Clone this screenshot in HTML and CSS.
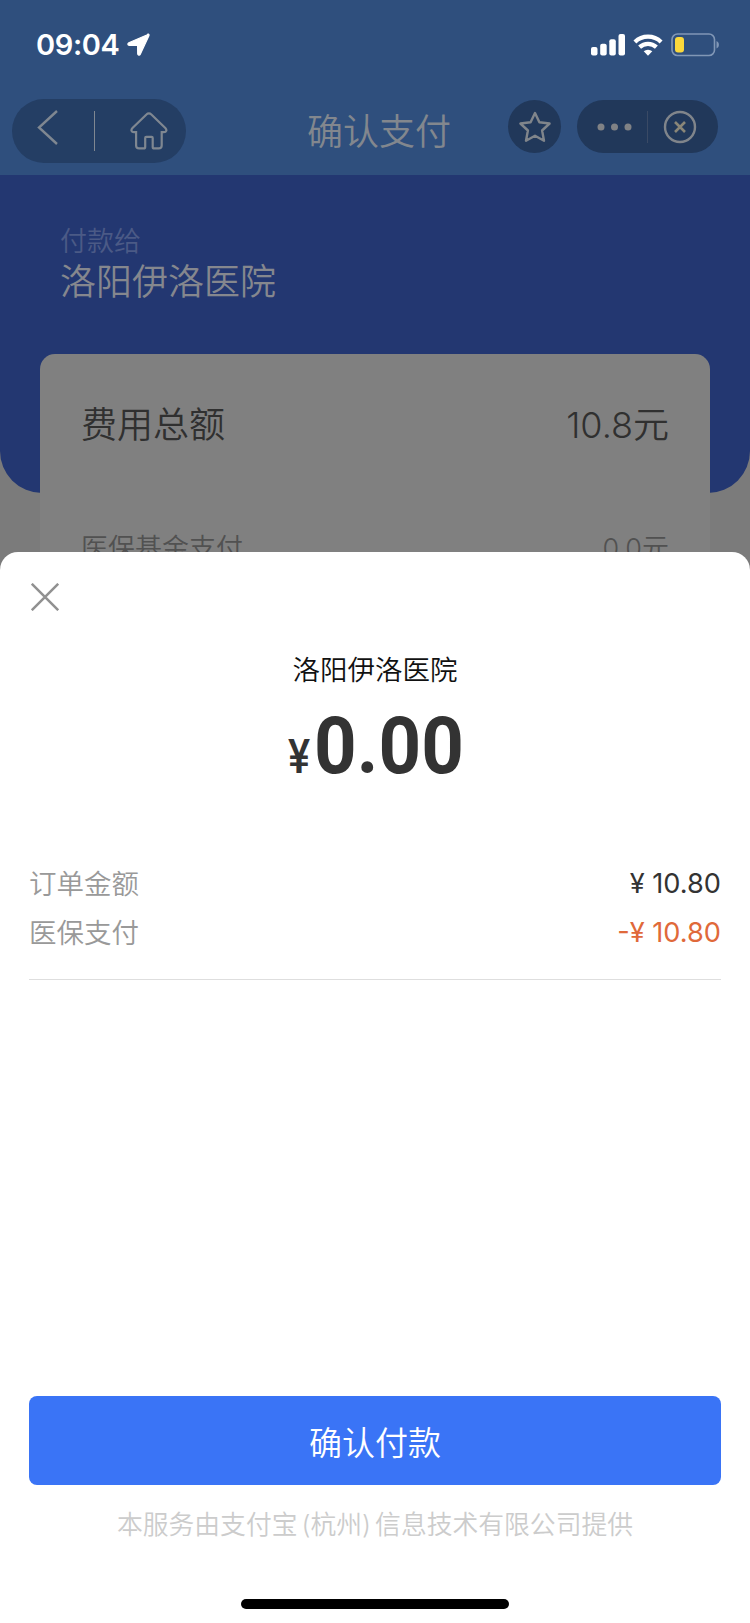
FILE: index.html
```html
<!DOCTYPE html>
<html lang="zh-CN">
<head>
<meta charset="utf-8">
<title>确认支付</title>
<link rel="stylesheet" href="styles.css">
</head>
<body>
<div class="screen">
  <header class="header">
    <div class="status">
      <div class="status-left">
        <span class="time">09:04</span>
        <svg class="locate" width="24" height="24" viewBox="0 0 24 24"><path d="M21.600 1.200 1.800 9.800c-1.500.7-1.100 2.500.4 2.500l7.900.1c.4 0 .5.1.5.5l.1 7.900c0 1.600 1.900 2 2.600.4l8.600-18.400c.5-1.200-.2-2.100-1.300-1.600z" fill="#fff" stroke="#fff" stroke-width="1.200" stroke-linejoin="round"/></svg>
      </div>
      <div class="status-right">
        <svg width="34" height="22" viewBox="0 0 34 22" fill="#fff"><rect x="0" y="13" width="6.500" height="8.500" rx="2"/><rect x="9.200" y="9.700" width="6.500" height="11.800" rx="2"/><rect x="18.300" y="5.200" width="6.500" height="16.300" rx="2"/><rect x="27.500" y="0" width="6.500" height="21.500" rx="2"/></svg>
        <svg width="30" height="22" viewBox="0 0 30 22" fill="none" stroke="#fff" stroke-width="4.200"><path d="M1.900 7.900a19 19 0 0 1 26.200 0"/><path d="M6.600 13.100a12.300 12.300 0 0 1 16.800 0"/><path d="M15 21.800 10.700 17.300a6.500 6.500 0 0 1 8.600 0z" fill="#fff" stroke="none"/></svg>
        <svg width="49" height="24" viewBox="0 0 49 24"><rect x="1" y="1" width="42.500" height="21.500" rx="5.500" fill="none" stroke="#8197b6" stroke-width="1.600"/><rect x="4" y="4" width="9" height="15.500" rx="3" fill="#fbd83b"/><path d="M45.500 8c3.200 1.300 3.200 6.200 0 7.500z" fill="#8197b6"/></svg>
      </div>
    </div>
    <div class="nav">
      <div class="pill pill-left">
        <svg class="back" width="24" height="38" viewBox="0 0 24 38"><path d="M21 2 3 18.500 21 35" fill="none" stroke="#7f8791" stroke-width="2.400"/></svg>
        <i class="divider"></i>
        <svg class="home" width="38" height="38" viewBox="0 0 38 38"><path d="M16.700 2.300a3 3 0 0 1 4.400 0L35.300 16c2 2.200 1 4.200-1.400 4.200h-2.200v13.200a3 3 0 0 1-3 3h-4.500a1.500 1.500 0 0 1-1.500-1.500v-9a1 1 0 0 0-1-1h-5.500a1 1 0 0 0-1 1v9a1.500 1.500 0 0 1-1.500 1.500H9.100a3 3 0 0 1-3-3V20.200H3.900c-2.400 0-3.400-2-1.400-4.200z" fill="none" stroke="#7f8791" stroke-width="2.200"/></svg>
      </div>
      <h1 class="title">确认支付</h1>
      <div class="star"><svg width="34" height="34" viewBox="0 0 34 34"><path d="M17 3 21.400 12.200 31.600 13.500 24.100 20.500 26 30.700 17 25.700 8 30.700 9.900 20.500 2.400 13.500 12.600 12.200z" fill="none" stroke="#80858b" stroke-width="2.400" stroke-linejoin="round"/></svg></div>
      <div class="pill pill-right">
        <svg class="dots" width="36" height="8" viewBox="0 0 36 8" fill="#808285"><circle cx="4" cy="4" r="3.500"/><circle cx="17.500" cy="4" r="3.500"/><circle cx="31" cy="4" r="3.500"/></svg>
        <i class="divider divider-dim"></i>
        <svg class="quit" width="34" height="34" viewBox="0 0 34 34" fill="none" stroke="#80858b" stroke-width="2.400"><circle cx="17" cy="17" r="15"/><path d="m12 12 10 10M22 12 12 22" stroke="#898678" stroke-width="2.600"/></svg>
      </div>
    </div>
  </header>
  <main class="main">
    <section class="hero">
      <div class="payto">付款给</div>
      <div class="payee">洛阳伊洛医院</div>
    </section>
    <section class="card">
      <div class="total"><span>费用总额</span><span class="total-value">10.8元</span></div>
      <div class="fund"><span>医保基金支付</span><span class="fund-value">0.0元</span></div>
    </section>
  </main>
  <section class="sheet">
    <svg class="close" width="28" height="28" viewBox="0 0 28 28"><path d="M.8.800 27.200 27.200M27.200.800.800 27.200" stroke="#919191" stroke-width="2.500"/></svg>
    <h2 class="merchant">洛阳伊洛医院</h2>
    <div class="amount"><span class="yen">¥</span><span class="figure">0.00</span></div>
    <div class="details">
      <div class="row"><span class="label">订单金额</span><span class="value">¥ 10.80</span></div>
      <div class="row"><span class="label">医保支付</span><span class="value discount">-¥ 10.80</span></div>
    </div>
    <footer class="footer">
      <button class="pay">确认付款</button>
      <p class="provider">本服务由支付宝<span class="paren">(杭州)</span>信息技术有限公司提供</p>
      <div class="home-bar"></div>
    </footer>
  </section>
</div>
</body>
</html>
```
FILE: styles.css
```css
* { box-sizing: border-box; }
body { margin: 0; font-family: Inter, "Noto Sans CJK SC", sans-serif; }
h1, h2, p { margin: 0; font-weight: 400; }
svg { display: block; flex: none; }
.screen { position: relative; width: 750px; height: 1623px; overflow: hidden; background: #7b7b7b; }

.header { height: 175px; background: #2f4f7d; }
.status { height: 90px; padding: 0 30px 0 36px; display: flex; justify-content: space-between; align-items: center; }
.status-left, .status-right { display: flex; align-items: center; }
.status-left { gap: 8px; }
.status-right { gap: 8px; }
.time { color: #fff; font-size: 29px; font-weight: 600; letter-spacing: -0.4px; line-height: 36px; }
.nav { display: flex; align-items: flex-start; height: 85px; padding-top: 9px; }
.pill { display: flex; align-items: center; }
.pill-left { width: 174px; height: 64px; margin-left: 12px; border-radius: 32px; background: #243e64; padding-left: 24px; }
.back { margin-top: -7px; }
.divider { width: 1px; height: 40px; margin-left: 34px; background: #7f8791; }
.home { margin-left: 35px; }
.title { width: 144px; margin: 6px 0 0 121px; font-size: 36px; line-height: 54px; font-weight: 350; color: #82878e; white-space: nowrap; }
.star { width: 53px; height: 53px; margin: 1px 0 0 57px; border-radius: 50%; background: #21385a; display: flex; align-items: center; justify-content: center; }
.pill-right { width: 141px; height: 53px; margin: 1px 0 0 16px; border-radius: 27px; background: #21385a; padding-left: 20px; }
.divider-dim { height: 32px; margin-left: 14px; background: #3a4a65; }
.quit { margin-left: 15px; }

.hero { height: 318px; padding: 47px 60px 0; border-radius: 0 0 42px 42px; background: #233771; }
.payto { color: #4b5a86; font-size: 27px; line-height: 40px; font-weight: 350; }
.payee { color: #85878e; font-size: 36px; line-height: 40px; font-weight: 350; }
.card { height: 400px; margin: -139px 40px 0; padding: 44px 41px 0; border-radius: 15px; background: #808080; position: relative; }
.total, .fund { display: flex; justify-content: space-between; }
.total { color: #303030; font-size: 36px; line-height: 54px; font-weight: 350; }
.fund { color: #515151; font-size: 27px; line-height: 40px; font-weight: 350; margin-top: 77px; }

.sheet { position: absolute; left: 0; right: 0; bottom: 0; height: 1071px; background: #fff; border-radius: 18px 18px 0 0; display: flex; flex-direction: column; padding: 31px 29px 0; }
.close { margin-left: 2px; }
.merchant { margin-top: 39px; text-align: center; color: #111; font-size: 27.5px; line-height: 40px; font-weight: 350; }
.amount { display: flex; justify-content: center; align-items: baseline; margin-top: 7px; height: 98px; line-height: 98px; color: #333; font-family: Roboto, sans-serif; }
.yen { font-size: 49px; font-weight: 500; width: 26px; transform: scaleX(0.85); transform-origin: left; }
.figure { font-size: 80px; font-weight: 700; width: 149px; letter-spacing: 0.1px; transform: scaleX(0.93); transform-origin: left; }
.details { margin-top: 64px; padding-bottom: 22px; border-bottom: 1px solid #dedede; }
.row { display: flex; justify-content: space-between; height: 49px; align-items: center; font-size: 27.5px; line-height: 40px; font-weight: 350; }
.label { color: #999; }
.value { color: #333; font-size: 27.2px; font-weight: 400; }
.discount { color: #e0693a; }
.footer { margin-top: auto; height: 227px; display: flex; flex-direction: column; align-items: center; }
.pay { width: 692px; height: 89px; border: 0; border-radius: 8px; background: #3a74f6; color: #fff; font: 350 33px "Noto Sans CJK SC", sans-serif; padding: 0; }
.provider { margin-top: 20px; color: #ccc; font-size: 25.8px; line-height: 40px; font-weight: 350; white-space: nowrap; }
.paren { margin: 0 4px; }
.home-bar { width: 268px; height: 10px; margin-top: 54px; border-radius: 5px; background: #000; }
```
